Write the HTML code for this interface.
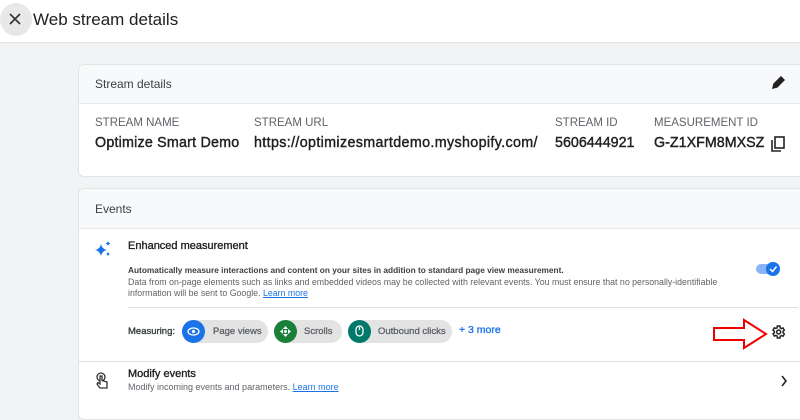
<!DOCTYPE html><html><head><style>
body{margin:0;width:800px;height:400px;overflow:hidden;background:#f1f3f4;font-family:"Liberation Sans",Arial,sans-serif;color:#202124;position:relative}
.a{position:absolute;white-space:nowrap}
.m{-webkit-text-stroke:0.35px currentColor}
.lbl{font-size:11.5px;color:#5f6368;top:117px}
.val{font-size:14.3px;top:135px;color:#202124;-webkit-text-stroke:0.4px #202124}
.chip{position:absolute;top:320px;height:23px;background:#e3e3e3;border-radius:12px;font-size:9.5px;color:#5f6368;line-height:23px;-webkit-text-stroke:0.3px #5f6368}
.chip i{position:absolute;left:0;top:0;width:23px;height:23px;border-radius:50%}
.chip span{position:absolute;white-space:nowrap}
</style></head><body>
<div class="a" style="left:0;top:0;width:800px;height:42px;background:#fff;border-bottom:1px solid #e0e0e0"></div>
<div class="a" style="left:0;top:3px;width:32px;height:33px;border-radius:50%;background:#e8e8e8"></div>
<svg class="a" style="left:9px;top:13px" width="12" height="12"><path d="M1 1L11 11M11 1L1 11" stroke="#333" stroke-width="1.6"/></svg>
<div class="a" style="left:33px;top:10px;font-size:17px">Web stream details</div>

<div class="a" style="left:78px;top:64px;width:730px;height:111px;background:#fff;border:1px solid #e3e3e3;border-radius:6px;overflow:hidden">
<div style="height:38px;background:#f8f9fa;border-bottom:1px solid #e8e8e8"></div></div>
<div class="a" style="left:95px;top:77px;font-size:12px;color:#3c4043">Stream details</div>
<svg class="a" style="left:771px;top:76px" width="14" height="14"><path d="M2 12L3 8L10 1L13 4L6 11Z" fill="#222" stroke="#222" stroke-width="1.5"/></svg>
<div class="a lbl" style="left:95px">STREAM NAME</div><div class="a val" style="left:95px;letter-spacing:0.2px">Optimize Smart Demo</div>
<div class="a lbl" style="left:254px">STREAM URL</div><div class="a val" style="left:254px;letter-spacing:0.35px">https://optimizesmartdemo.myshopify.com/</div>
<div class="a lbl" style="left:555px">STREAM ID</div><div class="a val" style="left:555px">5606444921</div>
<div class="a lbl" style="left:654px">MEASUREMENT ID</div><div class="a val" style="left:654px">G-Z1XFM8MXSZ</div>
<svg class="a" style="left:770px;top:136px" width="16" height="16"><rect x="5" y="1" width="9" height="11" fill="none" stroke="#222" stroke-width="1.6"/><path d="M2 4V15H11" fill="none" stroke="#222" stroke-width="1.6"/></svg>

<div class="a" style="left:78px;top:188px;width:730px;height:230px;background:#fff;border:1px solid #e3e3e3;border-radius:6px;overflow:hidden">
<div style="height:39px;background:#f8f9fa;border-bottom:1px solid #e8e8e8"></div></div>
<div class="a" style="left:95px;top:202px;font-size:12px;color:#3c4043">Events</div>
<svg class="a" style="left:95px;top:241px" width="16" height="16"><path d="M6 3Q7 8 12 9Q7 10 6 15Q5 10 0 9Q5 8 6 3Z" fill="#1a73e8"/><path d="M13 0Q13.5 2 15.5 2.5Q13.5 3 13 5Q12.5 3 10.5 2.5Q12.5 2 13 0Z M13 11Q13.5 12.5 15 13Q13.5 13.5 13 15Q12.5 13.5 11 13Q12.5 12.5 13 11Z" fill="#1a73e8"/></svg>
<div class="a m" style="left:128px;top:240px;font-size:11px;color:#202124">Enhanced measurement</div>
<div class="a" style="left:128px;top:265px;font-size:8.3px;color:#3c4043;font-weight:bold">Automatically measure interactions and content on your sites in addition to standard page view measurement.</div>
<div class="a" style="left:128px;top:277px;font-size:8.8px;color:#5f6368;line-height:11px">Data from on-page elements such as links and embedded videos may be collected with relevant events. You must ensure that no personally-identifiable<br>information will be sent to Google. <span style="color:#1a73e8;text-decoration:underline">Learn more</span></div>
<div class="a" style="left:756px;top:264px;width:22px;height:10px;border-radius:5px;background:#8ab4f8"></div>
<div class="a" style="left:766px;top:262px;width:14px;height:14px;border-radius:50%;background:#1a73e8"></div>
<svg class="a" style="left:768px;top:264px" width="10" height="10"><path d="M2 5L4.5 7.5L8.5 2.5" fill="none" stroke="#fff" stroke-width="1.5"/></svg>
<div class="a" style="left:128px;top:307px;width:670px;height:1px;background:#e0e0e0"></div>
<div class="a m" style="left:128px;top:326px;font-size:9.5px;color:#3c4043">Measuring:</div>
<div class="chip" style="left:182px;width:86px"><i style="background:#1a73e8"></i><span style="left:31px">Page views</span></div>
<svg class="a" style="left:187px;top:326px" width="13" height="11"><ellipse cx="6.5" cy="5.5" rx="5.5" ry="3.5" fill="none" stroke="#fff" stroke-width="1.3"/><circle cx="6.5" cy="5.5" r="1.6" fill="#fff"/></svg>
<div class="chip" style="left:274px;width:68px"><i style="background:#188038"></i><span style="left:30px">Scrolls</span></div>
<svg class="a" style="left:280px;top:326px" width="11" height="11"><path d="M5.5 0L8 3H3Z M5.5 11L8 8H3Z M0 5.5L3 3V8Z M11 5.5L8 3V8Z" fill="#fff"/><circle cx="5.5" cy="5.5" r="1.5" fill="#fff"/></svg>
<div class="chip" style="left:348px;width:104px"><i style="background:#00796b"></i><span style="left:30px">Outbound clicks</span></div>
<svg class="a" style="left:355px;top:325px" width="9" height="12"><rect x="1" y="1" width="7" height="10" rx="3.5" fill="none" stroke="#fff" stroke-width="1.3"/><path d="M4.5 2V5" stroke="#fff" stroke-width="1.3"/></svg>
<div class="a m" style="left:459px;top:324px;font-size:10.5px;color:#1a73e8">+ 3 more</div>
<svg class="a" style="left:712px;top:318px" width="56" height="32"><path d="M2 10H32V2L54 16L32 30V22H2Z" fill="#fff" stroke="#e00" stroke-width="2"/></svg>
<svg class="a" style="left:770px;top:324px" width="16" height="16" viewBox="0 0 24 24"><path d="M19.4 13a7.5 7.5 0 000-2l2.1-1.6-2-3.5-2.5 1a7 7 0 00-1.7-1L15 3h-4l-.4 2.7a7 7 0 00-1.7 1l-2.5-1-2 3.5L6.6 11a7.5 7.5 0 000 2l-2.1 1.6 2 3.5 2.5-1a7 7 0 001.7 1L11 21h4l.4-2.7a7 7 0 001.7-1l2.5 1 2-3.5z" fill="none" stroke="#222" stroke-width="2.2"/><circle cx="13" cy="12" r="3" fill="none" stroke="#222" stroke-width="2.2"/></svg>
<div class="a" style="left:79px;top:361px;width:730px;height:1px;background:#e0e0e0"></div>
<svg class="a" style="left:95px;top:372px" width="14" height="17"><circle cx="6" cy="5" r="4" fill="none" stroke="#333" stroke-width="1.3"/><path d="M5 4V12L3 10.5L2 12L5 16H12V10L7 8.5V4Z" fill="#fff" stroke="#333" stroke-width="1.3"/></svg>
<div class="a m" style="left:128px;top:368px;font-size:11px">Modify events</div>
<div class="a" style="left:128px;top:382px;font-size:9px;color:#5f6368">Modify incoming events and parameters. <span style="color:#1a73e8;text-decoration:underline">Learn more</span></div>
<svg class="a" style="left:780px;top:375px" width="8" height="12"><path d="M2 1L6 6L2 11" fill="none" stroke="#222" stroke-width="1.6"/></svg>
</body></html>
